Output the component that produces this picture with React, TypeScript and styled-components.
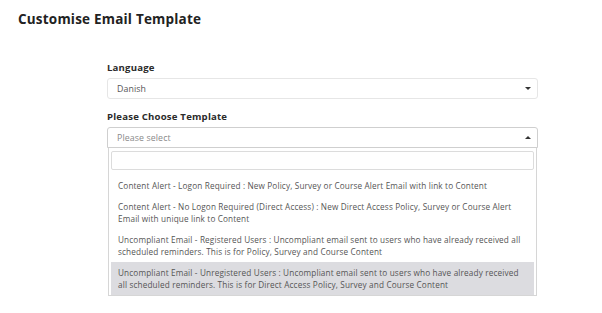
import styled, { createGlobalStyle } from 'styled-components'

const GlobalStyle = createGlobalStyle`
	body {
		margin: 0;
		background: #fff;
		font-family: 'Open Sans', 'Liberation Sans', sans-serif;
	}
`

const templates = [
	'Content Alert - Logon Required : New Policy, Survey or Course Alert Email with link to Content',
	'Content Alert - No Logon Required (Direct Access) : New Direct Access Policy, Survey or Course Alert Email with unique link to Content',
	'Uncompliant Email - Registered Users : Uncompliant email sent to users who have already received all scheduled reminders. This is for Policy, Survey and Course Content',
	'Uncompliant Email - Unregistered Users : Uncompliant email sent to users who have already received all scheduled reminders. This is for Direct Access Policy, Survey and Course Content',
]

export default function App() {
	return (
		<Page>
			<GlobalStyle />
			<Title>Customise Email Template</Title>
			<Form>
				<Label>Language</Label>
				<Select>
					<Value>Danish</Value>
					<Caret />
				</Select>

				<Label>Please Choose Template</Label>
				<Field>
					<Select $open>
						<Value $placeholder>Please select</Value>
						<Caret $up />
					</Select>
					<Dropdown>
						<Search />
						<Options>
							{templates.map((t, i) => (
								<Option key={i} $active={i === templates.length - 1}>{t}</Option>
							))}
						</Options>
					</Dropdown>
				</Field>
			</Form>
		</Page>
	)
}

const Page = styled.div`
	width: 602px;
	height: 313px;
	padding: 10px 0 0 18px;
	box-sizing: border-box;
	overflow: hidden;
`

const Title = styled.h1`
	margin: 0;
	font-size: 13.5px;
	letter-spacing: 0.2px;
	line-height: 18px;
	font-weight: 700;
	color: #222;
`

const Form = styled.div`
	width: 431px;
	margin: 33px 0 0 89px;
	display: flex;
	flex-direction: column;
`

const Label = styled.div`
	font-size: 9.6px;
	letter-spacing: 0.2px;
	font-weight: 700;
	color: #2b2b2b;
	line-height: 14px;
	margin-bottom: 3px;

	& + div + & {
		margin-top: 11px;
	}
`

const Field = styled.div`
	position: relative;
`

const Select = styled.div<{ $open?: boolean }>`
	height: 21px;
	box-sizing: border-box;
	border: 1px solid ${p => (p.$open ? '#cfcfcf' : '#e6e6e6')};
	border-radius: ${p => (p.$open ? '3px 3px 0 0' : '3px')};
	display: flex;
	align-items: center;
	padding: 0 6px 0 9px;
	background: #fff;
`

const Value = styled.span<{ $placeholder?: boolean }>`
	flex: 1;
	font-size: 8.8px;
	letter-spacing: 0.1px;
	color: ${p => (p.$placeholder ? '#8a8a8a' : '#555')};
`

const Caret = styled.span<{ $up?: boolean }>`
	width: 0;
	height: 0;
	border-left: 3px solid transparent;
	border-right: 3px solid transparent;
	${p => (p.$up ? 'border-bottom: 3px solid #333;' : 'border-top: 3px solid #333;')}
`

const Dropdown = styled.div`
	position: absolute;
	left: 1px;
	right: 1px;
	top: 21px;
	background: #fff;
	border: 1px solid #d6d6d6;
	border-top: none;
	padding: 3px 2px 0;
`

const Search = styled.div`
	height: 19px;
	box-sizing: border-box;
	border: 1px solid #dcdcdc;
	border-radius: 2px;
	margin-bottom: 5px;
`

const Options = styled.div`
	display: flex;
	flex-direction: column;
`

const Option = styled.div<{ $active?: boolean }>`
	padding: 4.5px 7px;
	font-size: 8.2px;
	letter-spacing: 0.15px;
	line-height: 12px;
	color: #555;
	background: ${p => (p.$active ? '#dcdce0' : 'transparent')};
`
